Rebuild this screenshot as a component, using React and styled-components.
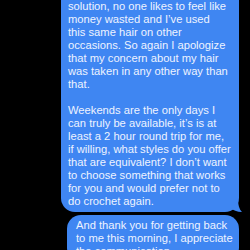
import styled, { createGlobalStyle } from "styled-components";

const GlobalStyle = createGlobalStyle`
  html, body {
    margin: 0;
    padding: 0;
    background: #000;
    overflow: hidden;
  }
`;

const messages = [
  {
    id: 1,
    clipped: true,
    tail: true,
    paragraphs: [
      [
        "solution, no one likes to feel like",
        "money wasted and I\u2019ve used",
        "this same hair on other",
        "occasions. So again I apologize",
        "that my concern about my hair",
        "was taken in any other way than",
        "that.",
      ],
      [
        "Weekends are the only days I",
        "can truly be available, it\u2019s is at",
        "least a 2 hour round trip for me,",
        "if willing, what styles do you offer",
        "that are equivalent? I don\u2019t want",
        "to choose something that works",
        "for you and would prefer not to",
        "do crochet again.",
      ],
    ],
  },
  {
    id: 2,
    paragraphs: [
      [
        "And thank you for getting back",
        "to me this morning, I appreciate",
        "the communication.",
      ],
    ],
  },
];

const Thread = styled.div`
  display: flex;
  flex-direction: column;
  align-items: flex-end;
  gap: 3px;
  padding-right: 11px;
  font-family: "Liberation Sans", Arial, sans-serif;
`;

const Bubble = styled.div`
  position: relative;
  box-sizing: border-box;
  width: ${(p) => p.$width}px;
  background: #3f86f2;
  color: #eef3ff;
  font-size: 11.2px;
  line-height: 13px;
  padding: ${(p) => (p.$clipped ? "0 6px 4px 7px" : "4px 6px 4px 9px")};
  border-radius: ${(p) => (p.$clipped ? "0 0 14px 14px" : "14px")};
`;

const Tail = styled.svg`
  position: absolute;
  right: -3px;
  bottom: 0;
  width: 12px;
  height: 14px;
`;

const Paragraph = styled.p`
  margin: 0;
  & + & {
    margin-top: 13px;
  }
`;

const Line = styled.span`
  display: block;
  white-space: nowrap;
`;

export default function App() {
  return (
    <>
      <GlobalStyle />
      <Thread>
        {messages.map((m) => (
          <Bubble key={m.id} $clipped={m.clipped} $width={m.clipped ? 178 : 172}>
            {m.paragraphs.map((lines, i) => (
              <Paragraph key={i}>
                {lines.map((l, j) => (
                  <Line key={j}>{l}</Line>
                ))}
              </Paragraph>
            ))}
            {m.tail && (
              <Tail viewBox="0 0 12 14">
                <path d="M0 0 L8 0 C8 6 9 11 12 14 C7 14 3 12 0 10 Z" fill="#3f86f2" />
              </Tail>
            )}
          </Bubble>
        ))}
      </Thread>
    </>
  );
}
